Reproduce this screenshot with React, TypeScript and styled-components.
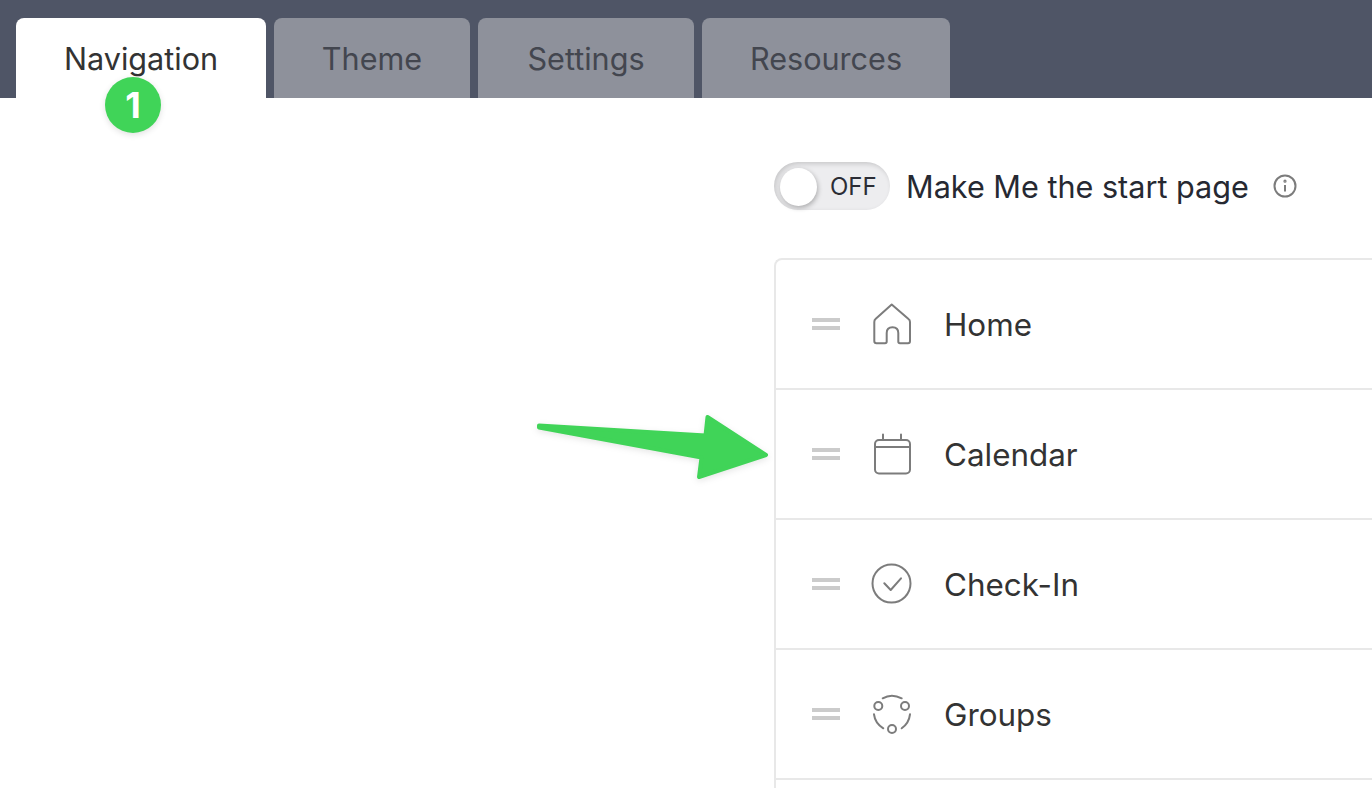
import React from "react";
import styled, { createGlobalStyle } from "styled-components";

const Global = createGlobalStyle`
  html, body { margin: 0; padding: 0; background: #fff; height: 100%; overflow: hidden; }
  body { font-family: Inter, "Liberation Sans", sans-serif; }
`;

const Page = styled.div`
  position: relative;
  width: 1372px;
  height: 788px;
  overflow: hidden;
`;
const TabBar = styled.div`
  display: flex;
  align-items: flex-end;
  gap: 8px;
  height: 98px;
  padding-left: 16px;
  background: #4f5566;
  box-sizing: border-box;
`;
const Tab = styled.div<{ $active?: boolean; $width: number }>`
  display: flex;
  justify-content: center;
  align-items: flex-start;
  box-sizing: border-box;
  width: ${(p) => p.$width}px;
  height: 80px;
  padding-top: 23px;
  border-radius: 8px 8px 0 0;
  background: ${(p) => (p.$active ? "#fff" : "#8e919b")};
  color: ${(p) => (p.$active ? "#333" : "#43464f")};
  font-size: 30.6px;
  line-height: 36px;
`;
const Badge = styled.div`
  position: absolute;
  left: 105px;
  top: 77px;
  width: 56px;
  height: 56px;
  border-radius: 50%;
  background: #40d458;
  color: #fff;
  font-size: 36px;
  font-weight: 700;
  display: flex;
  align-items: center;
  justify-content: center;
  box-shadow: 0 2px 6px rgba(0, 0, 0, 0.12);
`;
const Arrow = styled.svg`
  position: absolute;
  left: 530px;
  top: 408px;
  filter: drop-shadow(0 2px 3px rgba(0, 0, 0, 0.1));
`;
const Content = styled.div`
  padding: 64px 0 0 774px;
`;
const StartRow = styled.div`
  display: flex;
  align-items: center;
  height: 48px;
`;
const Toggle = styled.div`
  position: relative;
  box-sizing: border-box;
  width: 116px;
  height: 48px;
  border-radius: 24px;
  background: #ededef;
  box-shadow: inset 2px 2px 5px rgba(0, 0, 0, 0.16);
  color: #2b2d35;
  font-size: 24px;
  font-weight: 400;
  line-height: 49px;
  padding-left: 56px;
`;
const Knob = styled.div`
  position: absolute;
  left: 6px;
  top: 6px;
  width: 37px;
  height: 38px;
  border-radius: 50%;
  background: #fff;
  box-shadow: 1px 2px 5px rgba(0, 0, 0, 0.28);
`;
const StartLabel = styled.span`
  margin-left: 16px;
  font-size: 30.6px;
  color: #262932;
`;
const Info = styled.svg`
  margin-left: 23px;
`;
const List = styled.div`
  margin-top: 48px;
  width: 700px;
  box-sizing: border-box;
  border: 2px solid #e8e8e8;
  border-right: none;
  border-radius: 8px 0 0 0;
`;
const Row = styled.div`
  display: flex;
  align-items: center;
  box-sizing: border-box;
  height: 130px;
  padding-left: 36px;
  border-bottom: 2px solid #e8e8e8;
`;
const Handle = styled.div`
  width: 28px;
  height: 12px;
  border-top: 4px solid #cbcbcb;
  border-bottom: 4px solid #cbcbcb;
  box-sizing: border-box;
`;
const IconSlot = styled.svg`
  margin-left: 30px;
  flex: none;
  fill: none;
  stroke: #7c7c7c;
  stroke-width: 2;
  stroke-linecap: round;
  stroke-linejoin: round;
`;
const RowLabel = styled.span`
  margin-left: 30px;
  padding-top: 2px;
  font-size: 31.4px;
  color: #333;
`;

const icons: Record<string, React.ReactNode> = {
  home: <path d="M21.7 3.5 L5.5 18 Q4.3 19 4.3 21 V40 Q4.3 42.3 6.5 42.3 H15 Q16.7 42.3 16.7 40.5 V32 Q16.7 26.3 22.5 26.3 Q28.3 26.3 28.3 32 V40.5 Q28.3 42.3 30 42.3 H38 Q40 42.3 40 40 V21 Q40 19 38.5 18 Z" />,
  calendar: (
    <>
      <rect x="5" y="9" width="35" height="33.5" rx="4" />
      <path d="M5 16 H40 M13 3.5 V9 M31 3.5 V9" />
    </>
  ),
  check: (
    <>
      <circle cx="21.5" cy="22.5" r="19" />
      <path d="M14.3 22.3 L20.7 29 L31 17.3" />
    </>
  ),
  groups: (
    <>
      <path d="M12.7 7.3 Q21.7 2 31.7 7.3 M4 23.3 Q5 32 13.3 37.3 M40 23.3 Q39 32 31.7 37.3" />
      <circle cx="8.3" cy="15" r="4" />
      <circle cx="35" cy="15" r="4" />
      <circle cx="22" cy="38" r="4" />
    </>
  ),
};

const rows = [
  { key: "home", label: "Home" },
  { key: "calendar", label: "Calendar" },
  { key: "check", label: "Check-In" },
  { key: "groups", label: "Groups" },
];

const tabs = [
  { label: "Navigation", width: 250, active: true },
  { label: "Theme", width: 196 },
  { label: "Settings", width: 216 },
  { label: "Resources", width: 248 },
];

export default function App() {
  return (
    <Page>
      <Global />
      <TabBar>
        {tabs.map((t) => (
          <Tab key={t.label} $active={t.active} $width={t.width}>
            {t.label}
          </Tab>
        ))}
      </TabBar>
      <Content>
        <StartRow>
          <Toggle>
            <Knob />
            OFF
          </Toggle>
          <StartLabel>Make Me the start page</StartLabel>
          <Info width="26" height="26" viewBox="0 0 26 26" fill="none" stroke="#7c7c7c" strokeWidth="2">
            <circle cx="13" cy="13" r="10.5" />
            <path d="M13 12 V18.5" />
            <circle cx="13" cy="8.2" r="0.6" />
          </Info>
        </StartRow>
        <List>
          {rows.map((r) => (
            <Row key={r.key}>
              <Handle />
              <IconSlot width="44" height="46" viewBox="0 0 44 46">
                {icons[r.key]}
              </IconSlot>
              <RowLabel>{r.label}</RowLabel>
            </Row>
          ))}
          <Row />
        </List>
      </Content>
      <Badge>1</Badge>
      <Arrow width="250" height="85" viewBox="530 408 250 85">
        <path
          d="M539 425.5 L705.5 435.5 L707.5 417 L766 455 L699 477 L701.5 457.5 L539 427.5 Z"
          fill="#40d458"
          stroke="#40d458"
          strokeWidth="4"
          strokeLinejoin="round"
        />
      </Arrow>
    </Page>
  );
}
